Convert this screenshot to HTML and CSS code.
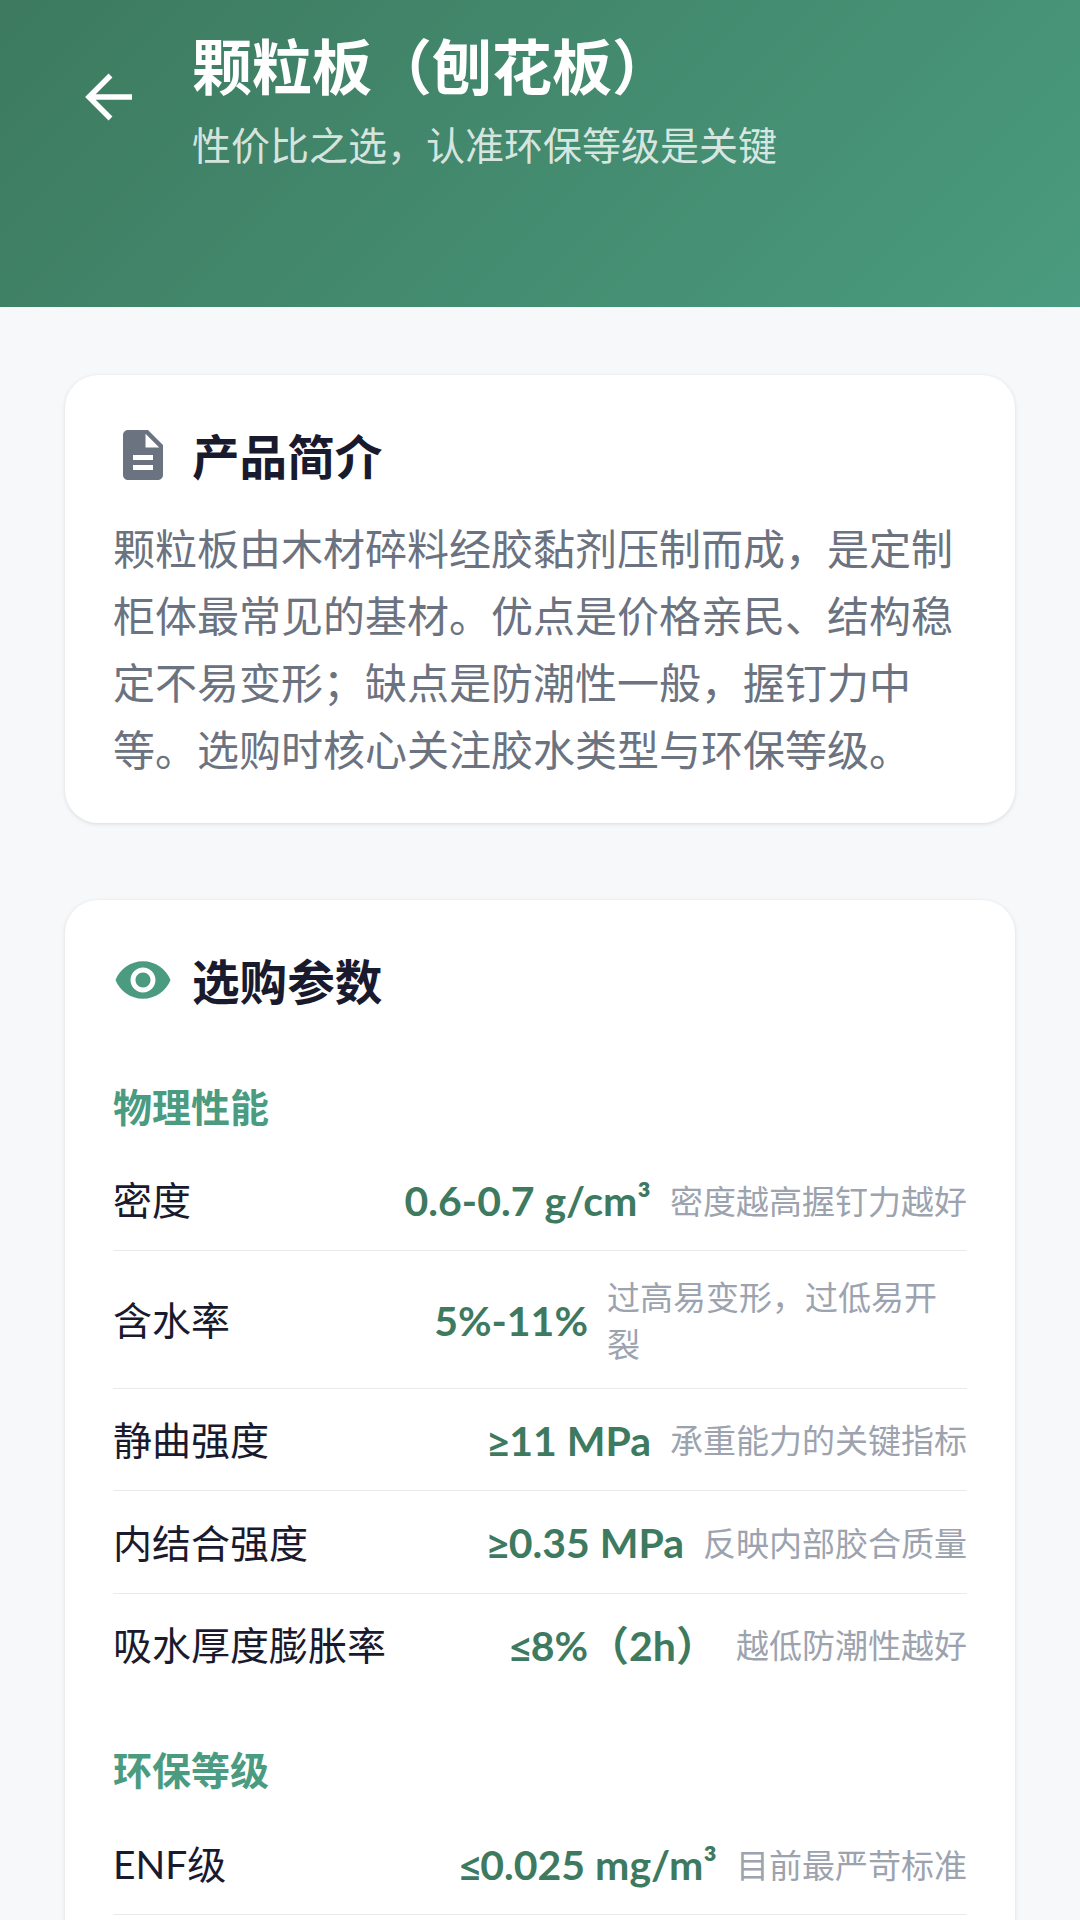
FILE: index.html
```html
<!DOCTYPE html>
<html lang="zh-CN">
<head>
    <meta charset="UTF-8">
    <meta name="viewport" content="width=device-width, initial-scale=1.0">
    <title>颗粒板（刨花板）</title>
    <link rel="stylesheet" href="styles.css">
</head>
<body>
    <header class="top-bar">
        <svg class="back" viewBox="0 0 66 66"><path d="M55 33H12M33.500 11.500L12 33l21.500 21.500"/></svg>
        <div class="top-text">
            <h1 class="title">颗粒板（刨花板）</h1>
            <p class="subtitle">性价比之选，认准环保等级是关键</p>
        </div>
    </header>

    <main class="content">
        <section class="card intro">
            <div class="card-head">
                <svg class="icon icon-gray" viewBox="0 0 24 24"><path d="M14 2H6c-1.1 0-1.99.9-1.99 2L4 20c0 1.1.89 2 1.99 2H18c1.1 0 2-.9 2-2V8l-6-6zm2 16H8v-2h8v2zm0-4H8v-2h8v2zm-3-5V3.5L18.5 9H13z"/></svg>
                <h2 class="card-title">产品简介</h2>
            </div>
            <p class="intro-text">颗粒板由木材碎料经胶黏剂压制而成，是定制柜体最常见的基材。优点是价格亲民、结构稳定不易变形；缺点是防潮性一般，握钉力中等。选购时核心关注胶水类型与环保等级。</p>
        </section>

        <section class="card">
            <div class="card-head">
                <svg class="icon icon-green" viewBox="0 0 24 24"><path d="M12 4.500C7 4.500 2.730 7.610 1 12c1.730 4.390 6 7.500 11 7.500s9.270-3.110 11-7.500c-1.730-4.390-6-7.500-11-7.500zM12 17c-2.760 0-5-2.240-5-5s2.240-5 5-5 5 2.240 5 5-2.240 5-5 5zm0-8c-1.660 0-3 1.340-3 3s1.340 3 3 3 3-1.340 3-3-1.340-3-3-3z"/></svg>
                <h2 class="card-title">选购参数</h2>
            </div>

            <h3 class="group-title first">物理性能</h3>
            <div class="row">
                <span class="label">密度</span>
                <span class="value">0.6-0.7 g/cm³</span>
                <span class="note">密度越高握钉力越好</span>
            </div>
            <div class="row">
                <span class="label">含水率</span>
                <span class="value">5%-11%</span>
                <span class="note">过高易变形，过低易开裂</span>
            </div>
            <div class="row">
                <span class="label">静曲强度</span>
                <span class="value"><span class="sign">≥</span>11 MPa</span>
                <span class="note">承重能力的关键指标</span>
            </div>
            <div class="row">
                <span class="label">内结合强度</span>
                <span class="value"><span class="sign">≥</span>0.35 MPa</span>
                <span class="note">反映内部胶合质量</span>
            </div>
            <div class="row last">
                <span class="label">吸水厚度膨胀率</span>
                <span class="value"><span class="sign">≤</span>8%（2h）</span>
                <span class="note">越低防潮性越好</span>
            </div>

            <h3 class="group-title">环保等级</h3>
            <div class="row">
                <span class="label">ENF级</span>
                <span class="value"><span class="sign">≤</span>0.025 mg/m³</span>
                <span class="note">目前最严苛标准</span>
            </div>
        </section>
    </main>
</body>
</html>
```

FILE: styles.css
```css
html, body {
    height: 1920px;
    overflow: hidden;
}

body {
    margin: 0;
    background-color: #f6f8fa;
    font-family: Lato, "Noto Sans CJK SC", sans-serif;
    line-height: 1.4;
    color: #1a1a2e;
}

.top-bar {
    height: 307px;
    box-sizing: border-box;
    padding: 27px 66px 0 77px;
    display: flex;
    background: linear-gradient(135deg, #3d7a5f, #4a9b7f);
}

.back {
    width: 66px;
    height: 66px;
    margin-top: 37px;
    margin-right: 49px;
    flex-shrink: 0;
    fill: none;
    stroke: #fff;
    stroke-width: 5.5;
}

.title {
    margin: 0;
    font-size: 60px;
    line-height: 80px;
    font-weight: 700;
    color: #fff;
}

.subtitle {
    margin: 11px 0 0;
    font-size: 39px;
    line-height: 54px;
    color: rgba(255, 255, 255, 0.8);
}

.content {
    padding: 68px 65px 0;
    display: flex;
    flex-direction: column;
    gap: 77px;
}

.card {
    padding: 49px 48px 80px;
    background-color: #fff;
    border-radius: 33px;
    box-shadow: 0 1px 4px rgba(0, 0, 0, 0.12);
}

.intro {
    padding-bottom: 39px;
}

.card-head {
    display: flex;
    align-items: center;
    gap: 19px;
}

.icon {
    width: 60px;
    height: 60px;
    flex-shrink: 0;
    margin-top: -4px;
}

.icon-gray {
    fill: #6b7280;
}

.icon-green {
    fill: #4a9b7f;
}

.card-title {
    margin: 0;
    font-size: 47.6px;
    line-height: 66px;
    font-weight: 700;
}

.intro-text {
    margin: 26px 0 0;
    font-size: 42px;
    line-height: 67px;
    color: #6b7280;
}

.group-title {
    margin: 48px 0 16px;
    font-size: 39px;
    line-height: 54px;
    font-weight: 700;
    color: #4a9b7f;
}

.group-title.first {
    margin: 65px 0 15px;
}

.row {
    display: flex;
    align-items: center;
    gap: 19px;
    padding: 23px 0 21px;
    border-bottom: 1px solid #e8eaed;
}

.row.last {
    border-bottom: none;
}

.label {
    flex-shrink: 0;
    font-size: 39px;
}

.value {
    flex: 1;
    text-align: right;
    font-size: 41px;
    font-weight: 700;
    color: #3d7a5f;
    white-space: nowrap;
}

.sign {
    font-family: "Open Sans", sans-serif;
    font-size: 36px;
}

.note {
    max-width: 360px;
    font-size: 33px;
    color: #9ca3af;
}
```
